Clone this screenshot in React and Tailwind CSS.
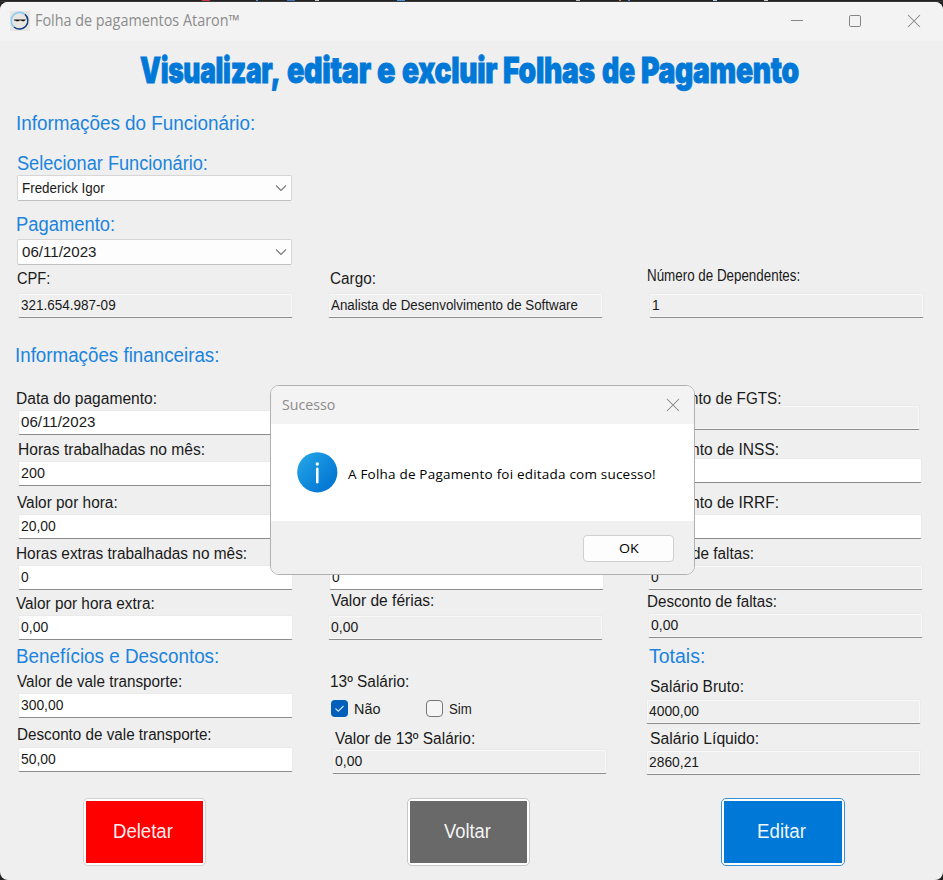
import { useLayoutEffect, useRef, useState } from "react";

// Text stretched or condensed horizontally to a given width.
function Fit({ w, spaced = false, className = "", children }) {
  const ref = useRef(null);
  const [style, setStyle] = useState({});
  useLayoutEffect(() => {
    const natural = ref.current.offsetWidth;
    if (spaced) setStyle({ letterSpacing: `${(w - natural) / String(children).length}px` });
    else setStyle({ transform: `scaleX(${w / natural})` });
  }, [w, spaced, children]);
  return (
    <span style={{ width: w }} className={`flex shrink-0 whitespace-nowrap ${className}`}>
      <span ref={ref} style={style} className="shrink-0 origin-left">
        {children}
      </span>
    </span>
  );
}

function Heading({ w, className, children }) {
  return (
    <h2 className={`h-6 shrink-0 text-[19.5px] leading-[26px] text-[#1a84de] ${className}`}>
      <Fit w={w}>{children}</Fit>
    </h2>
  );
}

function Label({ w, className, children }) {
  return (
    <div className={`h-5 shrink-0 text-[16px] leading-[19px] text-[#1a1a1a] ${className}`}>
      <Fit w={w}>{children}</Fit>
    </div>
  );
}

function Field({ value, w, readOnly, className }) {
  return (
    <div
      className={`flex h-[25px] w-[275px] shrink-0 rounded-[2px] border border-[#eaeaea] border-b-[#8b8b8b] pl-[2px] text-[15.5px] leading-[22px] text-[#1a1a1a] ${
        readOnly ? "bg-[#efefef] shadow-[inset_0_0_0_1px_#f8f8f8]" : "bg-white"
      } ${className}`}
    >
      {value && <Fit w={w}>{value}</Fit>}
    </div>
  );
}

function Select({ value, w, className }) {
  return (
    <div
      className={`flex h-[26px] w-[275px] shrink-0 items-center justify-between rounded-[2px] border border-[#d6d6d6] border-b-[#c0c0c0] bg-[#fdfdfd] pr-[4px] pl-[4px] text-[15.5px] leading-6 text-[#1a1a1a] ${className}`}
    >
      <Fit w={w}>{value}</Fit>
      <svg width="12" height="8" viewBox="0 0 12 8" fill="none" stroke="#777" strokeWidth="1.1">
        <path d="M1 1.5 6 6.5 11 1.5" />
      </svg>
    </div>
  );
}

function ActionButton({ w, frame, fill, className, children }) {
  return (
    <button className={`h-[68px] shrink-0 rounded-[5px] border bg-white p-[2px] ${frame} ${className}`}>
      <span className={`flex h-full w-full items-center justify-center pr-[3px] text-[19.5px] text-white/95 ${fill}`}>
        <Fit w={w}>{children}</Fit>
      </span>
    </button>
  );
}

function CloseIcon() {
  return (
    <svg width="14" height="14" viewBox="0 0 14 14" stroke="#858585" strokeWidth="1.05" fill="none">
      <path d="M1 1 13 13M13 1 1 13" />
    </svg>
  );
}

function AppLogo() {
  return (
    <svg width="20" height="20" viewBox="0 0 20 20" fill="none">
      <rect width="20" height="20" fill="#e9e6e2" />
      <path d="M4 16A8.2 8.2 0 0 1 15 3.4" stroke="#8ccdf5" strokeWidth="1.7" />
      <path d="M15 3.4A8.2 8.2 0 0 1 4 16" stroke="#123f86" strokeWidth="1.5" />
      <path d="M4 8.6H16L15 9.6 14 10.3H12.4L11 9.4H9.4L8.4 10.3H6.4L5 9.4H4Z" fill="#151515" />
    </svg>
  );
}

function TitleBar() {
  return (
    <header className="flex h-[39px] shrink-0 items-center bg-[#f3f3f3] pr-[22px] pb-[2px] pl-[10px] font-['Open_Sans',sans-serif] text-[15.5px] text-[#8c8c8c]">
      <AppLogo />
      <Fit w={204} className="ml-[5px]">Folha de pagamentos Ataron™</Fit>
      <div className="ml-auto flex items-center">
        <svg width="14" height="14" viewBox="0 0 14 14" stroke="#858585">
          <path d="M1 6.5H13" />
        </svg>
        <svg className="ml-[44px]" width="14" height="14" viewBox="0 0 14 14" stroke="#858585" fill="none">
          <rect x="1.5" y="1.5" width="11" height="11" rx="1.3" />
        </svg>
        <div className="ml-[45px]">
          <CloseIcon />
        </div>
      </div>
    </header>
  );
}

function PageTitle() {
  return (
    <h1 className="flex h-[69px] shrink-0 gap-[6.5px] pt-[7px] pl-[140px] font-['Inter',sans-serif] text-[35.5px] leading-[46px] font-black tracking-[-0.01em] text-[#0078d7] [-webkit-text-stroke:0.9px_#0078d7]">
      <Fit w={140}>Visualizar,</Fit>
      <Fit w={84}>editar</Fit>
      <Fit w={18}>e</Fit>
      <Fit w={95}>excluir</Fit>
      <Fit w={92}>Folhas</Fit>
      <Fit w={33}>de</Fit>
      <Fit w={158}>Pagamento</Fit>
    </h1>
  );
}

function EmployeeColumn() {
  return (
    <section className="flex w-[328px] flex-col pl-[17px]">
      <Heading w={239} className="-ml-px">Informações do Funcionário:</Heading>
      <Heading w={191} className="mt-4">Selecionar Funcionário:</Heading>
      <Select value="Frederick Igor" w={83} className="mt-px" />
      <Heading w={99} className="mt-[10px] -ml-px">Pagamento:</Heading>
      <Select value="06/11/2023" w={74} className="mt-1" />
      <Label w={33} className="mt-1">CPF:</Label>
      <Field readOnly value="321.654.987-09" w={95} className="mt-1 ml-px" />
      <Heading w={204} className="mt-6 -ml-[2px]">Informações financeiras:</Heading>
      <Label w={141} className="mt-[23px] -ml-px">Data do pagamento:</Label>
      <Field value="06/11/2023" w={74} className="mt-px ml-px" />
      <Label w={187} className="mt-[5px] ml-px">Horas trabalhadas no mês:</Label>
      <Field value="200" w={24} className="mt-px ml-px" />
      <Label w={101} className="mt-[7px]">Valor por hora:</Label>
      <Field value="20,00" w={35} className="mt-px ml-px" />
      <Label w={231} className="mt-[5px] -ml-px">Horas extras trabalhadas no mês:</Label>
      <Field value="0" w={8} className="mt-px ml-px" />
      <Label w={139} className="mt-1 -ml-px">Valor por hora extra:</Label>
      <Field value="0,00" w={27} className="mt-px ml-px" />
      <Heading w={203} className="mt-[3px] -ml-px">Benefícios e Descontos:</Heading>
      <Label w={165} className="mt-[5px]">Valor de vale transporte:</Label>
      <Field value="300,00" w={42} className="mt-px ml-px" />
      <Label w={195} className="mt-[7px]">Desconto de vale transporte:</Label>
      <Field value="50,00" w={35} className="mt-[2px] ml-px" />
      <ActionButton w={60} frame="border-[#d2d2d2]" fill="bg-[#ff0000]" className="mt-[26px] ml-[66px] w-[123px]">
        Deletar
      </ActionButton>
    </section>
  );
}

function PositionColumn() {
  return (
    <section className="flex w-[318px] flex-col pt-[159px]">
      <Label w={46} className="ml-[2px]">Cargo:</Label>
      <Field readOnly value="Analista de Desenvolvimento de Software" w={247} className="mt-1" />
      <Field value="0" w={8} className="mt-[247px] ml-px" />
      <Label w={103} className="mt-px ml-[3px]">Valor de férias:</Label>
      <Field readOnly value="0,00" w={27} className="mt-1" />
      <Label w={79} className="mt-8 ml-[2px]">13º Salário:</Label>
      <div className="mt-[7px] flex h-[18px] items-center pl-[3px] text-[15.5px] leading-[18px] text-[#1a1a1a]">
        <span className="flex size-[17px] items-center justify-center rounded-[4px] bg-[#005fb8]">
          <svg width="11" height="11" viewBox="0 0 11 11" fill="none" stroke="#cfe3f6" strokeWidth="1.1">
            <path d="M1.5 5.5 4.3 8.2 9.5 3" />
          </svg>
        </span>
        <span className="flex w-[78px] pt-px pl-[6px]">
          <Fit w={26}>Não</Fit>
        </span>
        <span className="size-[17px] rounded-[4px] border border-[#777] bg-[#f5f5f5]" />
        <span className="flex pt-px pl-[6px]">
          <Fit w={23}>Sim</Fit>
        </span>
      </div>
      <Label w={140} className="mt-3 ml-[7px]">Valor de 13º Salário:</Label>
      <Field readOnly value="0,00" w={27} className="ml-[4px]" />
      <ActionButton w={47} frame="border-[#c8c8c8]" fill="bg-[#696969]" className="mt-[24px] ml-[79px] w-[123px]">
        Voltar
      </ActionButton>
    </section>
  );
}

function TotalsColumn() {
  return (
    <section className="flex flex-1 flex-col pt-[156px]">
      <Label w={153} className="ml-px">Número de Dependentes:</Label>
      <Field readOnly value="1" w={8} className="mt-[7px] ml-[3px]" />
      <Label w={134} className="mt-[71px] ml-px">Desconto de FGTS:</Label>
      <Field readOnly className="-mt-1 -ml-px" />
      <Label w={132} className="mt-[10px] ml-px">Desconto de INSS:</Label>
      <Field className="-mt-[2px] ml-px" />
      <Label w={132} className="mt-[10px] ml-px">Desconto de IRRF:</Label>
      <Field className="mt-px ml-px" />
      <Label w={107} className="mt-[5px] ml-px">Horas de faltas:</Label>
      <Field readOnly value="0" w={8} className="mt-px ml-[2px]" />
      <Label w={130} className="mt-[2px] ml-px">Desconto de faltas:</Label>
      <Field readOnly value="0,00" w={27} className="mt-px ml-[2px]" />
      <Heading w={56} className="mt-[5px] ml-[3px]">Totais:</Heading>
      <Label w={94} className="mt-[10px] ml-[4px]">Salário Bruto:</Label>
      <Field readOnly value="4000,00" w={50} className="mt-[2px]" />
      <Label w={109} className="mt-[5px] ml-[4px]">Salário Líquido:</Label>
      <Field readOnly value="2860,21" w={50} className="mt-px" />
      <ActionButton w={49} frame="border-[#3a8fd8]" fill="bg-[#0078d7]" className="mt-[23px] ml-[75px] w-[124px]">
        Editar
      </ActionButton>
    </section>
  );
}

function SuccessDialog() {
  return (
    <div className="absolute top-[385px] left-[270px] flex h-[190px] w-[425px] flex-col overflow-hidden rounded-[9px] border border-[#b0b0b0] bg-white font-['Open_Sans',sans-serif]">
      <div className="flex h-[38px] shrink-0 items-center justify-between bg-[#f3f3f3] pr-[14px] pl-[11px] text-[15px] text-[#8c8c8c]">
        <Fit w={53} className="-mt-[2px]">Sucesso</Fit>
        <CloseIcon />
      </div>
      <div className="flex flex-1 items-center pl-[26px] text-[13.5px] font-medium text-black">
        <svg width="41" height="41" viewBox="0 0 41 41">
          <defs>
            <linearGradient id="info" x1="0" y1="0" x2="1" y2="1">
              <stop offset="0.1" stopColor="#22a3e6" />
              <stop offset="0.9" stopColor="#0072d0" />
            </linearGradient>
          </defs>
          <circle cx="20.3" cy="20.3" r="20.1" fill="url(#info)" />
          <circle cx="20.3" cy="12" r="1.7" fill="#fff" />
          <path d="M20.3 16.7V30.3" stroke="#fff" strokeWidth="2.5" strokeLinecap="round" />
        </svg>
        <Fit w={308} spaced className="mt-[4px] ml-[10px]">
          A Folha de Pagamento foi editada com sucesso!
        </Fit>
      </div>
      <div className="flex h-[53px] shrink-0 items-center justify-end bg-[#f0f0f0] pt-px pr-[20px]">
        <button className="flex h-[27px] w-[91px] items-center justify-center rounded-[4px] border border-[#d0d0d0] bg-[#fdfdfd] pt-px text-[13.5px] font-medium text-black">
          <Fit w={20}>OK</Fit>
        </button>
      </div>
    </div>
  );
}

export default function App() {
  return (
    <div className="relative flex h-[880px] w-[943px] flex-col overflow-hidden bg-[#222] font-['Liberation_Sans',Arial,sans-serif]">
      <div className="flex h-[2px] shrink-0 border-b border-[#3a3838]">
        <span className="ml-[202px] w-2 bg-[#d03848]" />
        <span className="ml-[46px] w-[2px] bg-[#4a90d9]" />
        <span className="ml-[29px] w-2 bg-[#3a73b0]" />
        <span className="ml-[20px] w-1 bg-[#ccc]" />
        <span className="ml-[78px] w-2 bg-[#4a90d9]" />
        <span className="ml-[171px] w-1 bg-[#bbb]" />
        <span className="ml-[39px] w-[2px] bg-[#c08040]" />
        <span className="ml-[7px] w-[2px] bg-[#4a90d9]" />
        <span className="ml-[83px] w-1 bg-[#a9c8ef]" />
        <span className="ml-[47px] w-1 bg-[#ccc]" />
      </div>
      <main className="flex flex-1 flex-col overflow-hidden rounded-[8px] bg-[#efefef]">
        <TitleBar />
        <PageTitle />
        <div className="flex flex-1">
          <EmployeeColumn />
          <PositionColumn />
          <TotalsColumn />
        </div>
      </main>
      <SuccessDialog />
    </div>
  );
}
